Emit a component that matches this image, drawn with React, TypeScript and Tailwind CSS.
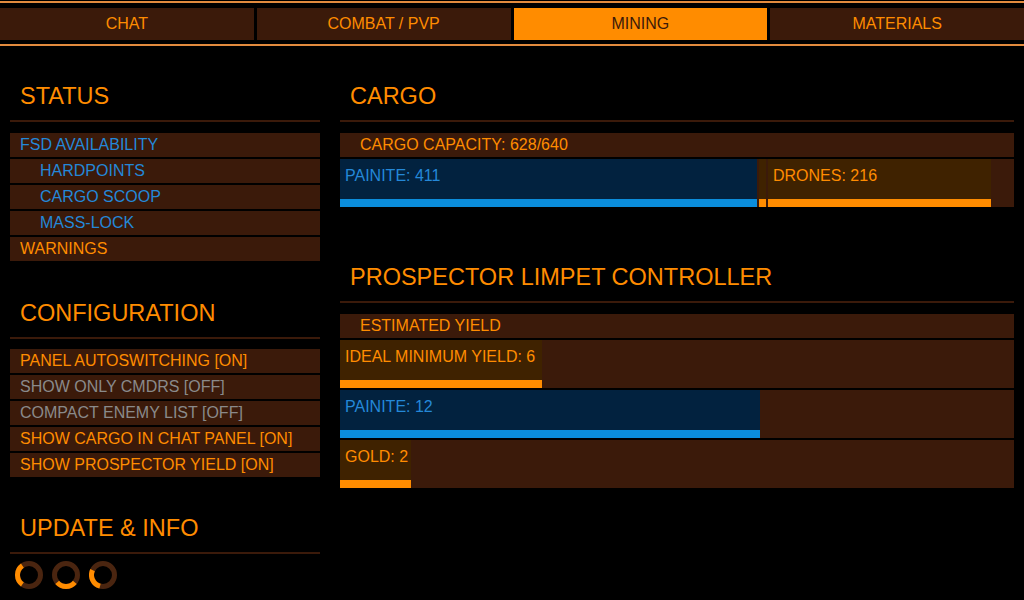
import React from 'react';

const ORANGE = 'text-[#ff8c00]';

type RowTone = 'orange' | 'blue' | 'gray';

const toneClass: Record<RowTone, string> = {
  orange: 'text-[#ff8c00]',
  blue: 'text-[#2488d8]',
  gray: 'text-[#8a8a8a]',
};

const tabs = ['CHAT', 'COMBAT / PVP', 'MINING', 'MATERIALS'];

const SectionHeader: React.FC<{ title: string }> = ({ title }) => (
  <div className="border-b-2 border-[#3b1a0a] pb-[10px]">
    <h2 className={`pl-[10px] text-[23.5px] leading-[28px] ${ORANGE}`}>{title}</h2>
  </div>
);

const Row: React.FC<{ label: string; tone?: RowTone; indent?: boolean; pad?: string }> = ({
  label,
  tone = 'orange',
  indent = false,
  pad,
}) => (
  <div
    className={`h-[24px] bg-[#3b1a0a] text-[16px] leading-[24px] ${toneClass[tone]} ${
      pad ? pad : indent ? 'pl-[30px]' : 'pl-[10px]'
    }`}
  >
    {label}
  </div>
);

// one coloured block inside a 48px bar row, with its meter at the bottom
const Segment: React.FC<{ label?: string; width: string; blue?: boolean; className?: string }> = ({
  label,
  width,
  blue = false,
  className = '',
}) => (
  <div className={`flex h-full flex-col ${width} ${blue ? 'bg-[#02223f]' : 'bg-[#3f2200]'} ${className}`}>
    <div
      className={`whitespace-nowrap pl-[5px] pt-[5px] text-[16px] leading-[24px] ${
        blue ? 'text-[#2488d8]' : 'text-[#ff8c00]'
      }`}
    >
      {label}
    </div>
    <div className={`mt-auto h-[8px] ${blue ? 'bg-[#0b8ddb]' : 'bg-[#ff8c00]'}`} />
  </div>
);

const Spinner: React.FC<{ d: string }> = ({ d }) => (
  <svg width="28" height="28" viewBox="0 0 28 28">
    <circle cx="14" cy="14" r="11.5" fill="none" stroke="#4a2510" strokeWidth="5" />
    <path d={d} fill="none" stroke="#ff8c00" strokeWidth="5" />
  </svg>
);

export default function App() {
  return (
    <div
      className="h-[600px] w-[1024px] overflow-hidden bg-black"
      style={{ fontFamily: '"Liberation Sans", Arial, sans-serif' }}
    >
      {/* Tab bar */}
      <div className="mt-[1px] border-y-2 border-[#e38b3e] pb-[4px] pt-[5px]">
        <div className="grid h-[32px] grid-cols-4 gap-[3px]">
          {tabs.map((t) => (
            <div
              key={t}
              className={`flex items-center justify-center text-[16px] ${
                t === 'MINING' ? 'bg-[#ff8c00] text-[#3b1a0a]' : 'bg-[#3b1a0a] text-[#ff8c00]'
              }`}
            >
              {t}
            </div>
          ))}
        </div>
      </div>

      <div className="flex gap-[20px] px-[10px] pt-[36px]">
        {/* Left column */}
        <div className="flex w-[310px] flex-col">
          <SectionHeader title="STATUS" />
          <div className="mt-[11px] flex flex-col gap-[2px]">
            <Row label="FSD AVAILABILITY" tone="blue" />
            <Row label="HARDPOINTS" tone="blue" indent />
            <Row label="CARGO SCOOP" tone="blue" indent />
            <Row label="MASS-LOCK" tone="blue" indent />
            <Row label="WARNINGS" />
          </div>

          <div className="mt-[38px]">
            <SectionHeader title="CONFIGURATION" />
          </div>
          <div className="mt-[10px] flex flex-col gap-[2px]">
            <Row label="PANEL AUTOSWITCHING [ON]" />
            <Row label="SHOW ONLY CMDRS [OFF]" tone="gray" />
            <Row label="COMPACT ENEMY LIST [OFF]" tone="gray" />
            <Row label="SHOW CARGO IN CHAT PANEL [ON]" />
            <Row label="SHOW PROSPECTOR YIELD [ON]" />
          </div>

          <div className="mt-[37px]">
            <SectionHeader title="UPDATE & INFO" />
          </div>
          <div className="mt-[7px] flex gap-[9px] pl-[5px]">
            <Spinner d="M7.4 23.42 A11.5 11.5 0 0 1 7.4 4.58" />
            <Spinner d="M22.81 21.39 A11.5 11.5 0 0 1 5.19 21.39" />
            <Spinner d="M11.02 25.11 A11.5 11.5 0 0 1 3.58 9.14" />
          </div>
        </div>

        {/* Right column */}
        <div className="flex flex-1 flex-col">
          <SectionHeader title="CARGO" />
          <div className="mt-[11px] flex flex-col gap-[2px]">
            <Row label="CARGO CAPACITY: 628/640" pad="pl-[20px]" />
            <div className="flex h-[48px] bg-[#3b1a0a]">
              <Segment label="PAINITE: 411" width="w-[417px]" blue />
              <Segment width="w-[7px]" className="ml-[2px]" />
              <Segment label="DRONES: 216" width="w-[223px]" className="ml-[2px]" />
            </div>
          </div>

          <div className="mt-[56px]">
            <SectionHeader title="PROSPECTOR LIMPET CONTROLLER" />
          </div>
          <div className="mt-[11px] flex flex-col gap-[2px]">
            <Row label="ESTIMATED YIELD" pad="pl-[20px]" />
            <div className="flex h-[48px] bg-[#3b1a0a]">
              <Segment label="IDEAL MINIMUM YIELD: 6" width="w-[202px]" />
            </div>
            <div className="flex h-[48px] bg-[#3b1a0a]">
              <Segment label="PAINITE: 12" width="w-[420px]" blue />
            </div>
            <div className="flex h-[48px] bg-[#3b1a0a]">
              <Segment label="GOLD: 2" width="w-[71px]" />
            </div>
          </div>
        </div>
      </div>
    </div>
  );
}
